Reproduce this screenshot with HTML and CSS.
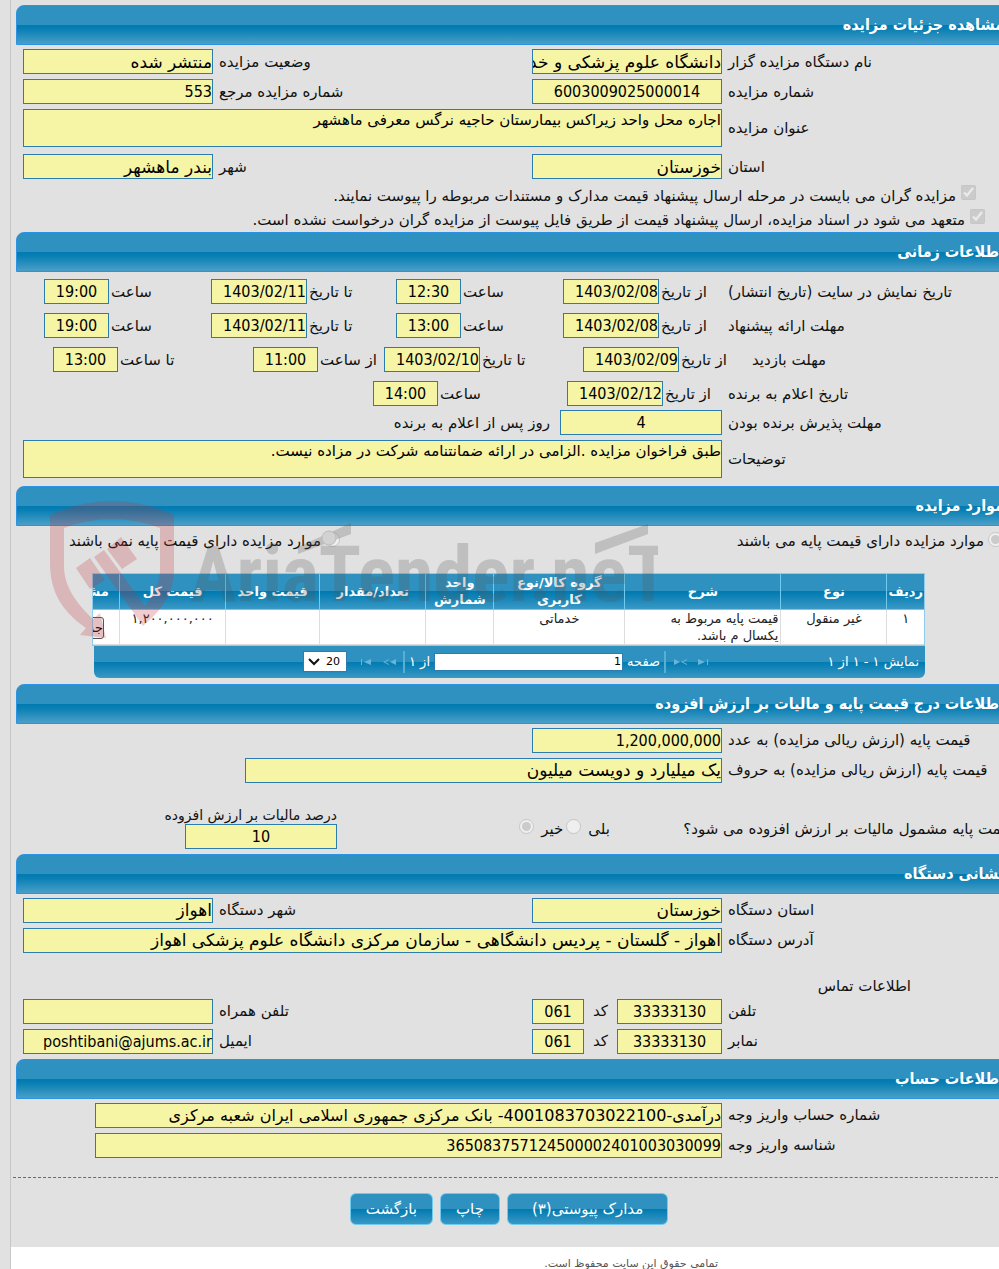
FILE: index.html
```html
<!DOCTYPE html>
<html lang="fa" dir="rtl">
<head>
    <meta charset="UTF-8">
    <meta name="viewport" content="width=device-width, initial-scale=1.0">
    <title>مشاهده جزئیات مزایده</title>
    <link rel="stylesheet" href="styles.css">
</head>
<body>
<main class="page">
<form class="panel">

    <!-- مشخصات مزایده -->
    <h2 class="bar">مشاهده جزئیات مزایده</h2>
    <div class="rows">
        <div class="row">
            <label for="org">نام دستگاه مزایده گزار</label>
            <input class="field fa" id="org" value="دانشگاه علوم پزشکی و خدمات" readonly>
            <label for="status">وضعیت مزایده</label>
            <input class="field fa" id="status" value="منتشر شده" readonly>
        </div>
        <div class="row">
            <label for="number">شماره مزایده</label>
            <input class="field center" id="number" value="6003009025000014" readonly>
            <label for="refNumber">شماره مزایده مرجع</label>
            <input class="field" id="refNumber" value="553" readonly>
        </div>
        <div class="row tall">
            <label for="subject">عنوان مزایده</label>
            <textarea class="field area" id="subject" readonly>اجاره محل واحد زیراکس بیمارستان حاجیه نرگس معرفی ماهشهر</textarea>
        </div>
        <div class="row">
            <label for="province">استان</label>
            <input class="field fa" id="province" value="خوزستان" readonly>
            <label for="city">شهر</label>
            <input class="field fa" id="city" value="بندر ماهشهر" readonly>
        </div>
    </div>
    <div class="checks">
        <div class="check first">
            <input type="checkbox" id="docs" checked disabled>
            <label for="docs">مزایده گران می بایست در مرحله ارسال پیشنهاد قیمت مدارک و مستندات مربوطه را پیوست نمایند.</label>
        </div>
        <div class="check">
            <input type="checkbox" id="files" checked disabled>
            <label for="files">متعهد می شود در اسناد مزایده، ارسال پیشنهاد قیمت از طریق فایل پیوست از مزایده گران درخواست نشده است.</label>
        </div>
    </div>

    <!-- اطلاعات زمانی -->
    <h2 class="bar">اطلاعات زمانی</h2>
    <div class="times">
        <div class="time-row">
            <span class="caption">تاریخ نمایش در سایت (تاریخ انتشار)</span>
            <div class="pair"><label for="showFrom">از تاریخ</label><input class="field date" id="showFrom" value="1403/02/08" readonly></div>
            <div class="pair"><label for="showFromTime">ساعت</label><input class="field time" id="showFromTime" value="12:30" readonly></div>
            <div class="pair"><label for="showTo">تا تاریخ</label><input class="field date" id="showTo" value="1403/02/11" readonly></div>
            <div class="pair"><label for="showToTime">ساعت</label><input class="field time" id="showToTime" value="19:00" readonly></div>
        </div>
        <div class="time-row">
            <span class="caption">مهلت ارائه پیشنهاد</span>
            <div class="pair"><label for="offerFrom">از تاریخ</label><input class="field date" id="offerFrom" value="1403/02/08" readonly></div>
            <div class="pair"><label for="offerFromTime">ساعت</label><input class="field time" id="offerFromTime" value="13:00" readonly></div>
            <div class="pair"><label for="offerTo">تا تاریخ</label><input class="field date" id="offerTo" value="1403/02/11" readonly></div>
            <div class="pair"><label for="offerToTime">ساعت</label><input class="field time" id="offerToTime" value="19:00" readonly></div>
        </div>
        <div class="time-row visit">
            <span class="caption">مهلت بازدید</span>
            <div class="pair"><label for="visitFrom">از تاریخ</label><input class="field date" id="visitFrom" value="1403/02/09" readonly></div>
            <div class="pair"><label for="visitTo">تا تاریخ</label><input class="field date" id="visitTo" value="1403/02/10" readonly></div>
            <div class="pair"><label for="visitFromTime">از ساعت</label><input class="field time" id="visitFromTime" value="11:00" readonly></div>
            <div class="pair"><label for="visitToTime">تا ساعت</label><input class="field time" id="visitToTime" value="13:00" readonly></div>
        </div>
        <div class="time-row winner">
            <span class="caption">تاریخ اعلام به برنده</span>
            <div class="pair"><label for="winDate">از تاریخ</label><input class="field date" id="winDate" value="1403/02/12" readonly></div>
            <div class="pair"><label for="winTime">ساعت</label><input class="field time" id="winTime" value="14:00" readonly></div>
        </div>
    </div>
    <div class="rows">
        <div class="row accept">
            <label for="accept">مهلت پذیرش برنده بودن</label>
            <input class="field center" id="accept" value="4" readonly>
            <span class="after">روز پس از اعلام به برنده</span>
        </div>
        <div class="row tall">
            <label for="notes">توضیحات</label>
            <textarea class="field area" id="notes" readonly>طبق فراخوان مزایده .الزامی در ارائه ضمانتنامه شرکت در مزاده نیست.</textarea>
        </div>
    </div>

    <!-- موارد مزایده -->
    <section class="items">
        <h2 class="bar">موارد مزایده</h2>
        <div class="choices">
            <div class="choice">
                <input type="radio" name="base" id="baseYes" checked disabled>
                <label for="baseYes">موارد مزایده دارای قیمت پایه می باشند</label>
            </div>
            <div class="choice">
                <input type="radio" name="base" id="baseNo" disabled>
                <label for="baseNo">موارد مزایده دارای قیمت پایه نمی باشند</label>
            </div>
        </div>
        <div class="grid-box">
            <div class="grid-scroll">
                <table>
                    <colgroup>
                        <col class="c-row"><col class="c-mid"><col class="c-desc"><col class="c-group"><col class="c-unit"><col class="c-mid"><col class="c-price"><col class="c-mid"><col class="c-view">
                    </colgroup>
                    <thead>
                        <tr>
                            <th>ردیف</th>
                            <th>نوع</th>
                            <th>شرح</th>
                            <th>گروه کالا/نوع کاربری</th>
                            <th>واحد شمارش</th>
                            <th>تعداد/مقدار</th>
                            <th>قیمت واحد</th>
                            <th>قیمت کل</th>
                            <th>مشاهده</th>
                        </tr>
                    </thead>
                    <tbody>
                        <tr>
                            <td>۱</td>
                            <td>غیر منقول</td>
                            <td class="desc">قیمت پایه مربوط به یکسال م باشد.</td>
                            <td>خدماتی</td>
                            <td></td>
                            <td></td>
                            <td></td>
                            <td>۱,۲۰۰,۰۰۰,۰۰۰</td>
                            <td><button type="button" class="detail">جزئیات</button></td>
                        </tr>
                    </tbody>
                </table>
            </div>
            <div class="pager">
                <span class="info">نمایش ۱ - ۱ از ۱</span>
                <div class="nav">
                    <svg class="arrow" viewBox="0 0 14 8"><path d="M1 1L8 4L1 7ZM10 1H11V7H10Z"/></svg>
                    <svg class="arrow" viewBox="0 0 14 8"><path d="M1 1L7 4L1 7ZM14 1L8 4L14 7V6L10 4L14 2Z"/></svg>
                    <span class="sep"></span>
                    <label for="pageNo">صفحه</label>
                    <input class="page-no" id="pageNo" value="1">
                    <span>از ۱</span>
                    <span class="sep"></span>
                    <svg class="arrow" viewBox="0 0 14 8"><path d="M14 1L8 4L14 7ZM7 1L1 4L7 7V6L3 4L7 2Z"/></svg>
                    <svg class="arrow" viewBox="0 0 14 8"><path d="M13 1L6 4L13 7ZM3 1H4V7H3Z"/></svg>
                    <span class="size">
                        <select aria-label="تعداد در صفحه"><option>20</option></select>
                        <svg viewBox="0 0 12 8"><path d="M1 1L6 6L11 1"/></svg>
                    </span>
                </div>
            </div>
        </div>
        <svg class="mark" viewBox="0 0 610 142" aria-hidden="true">
            <g class="mark-red">
                <path d="M2 17Q64 -11 126 17V72C126 96 112 114 95 128L46 59L56 52L97 108C106 95 112 84 112 72V30Q64 12 16 30V68C16 88 28 105 45 121L52 115L58 140L32 137L38 130C12 112 2 92 2 64Z"/>
                <path d="M59 51L73 39L89 61L74 71Z"/>
                <path d="M28 70L42 60L57 82L42 91Z"/>
            </g>
            <g class="mark-gray">
                <path d="M250 49L303 25V36L250 56Z"/>
                <path d="M547 45L600 26V36L547 56Z"/>
                <text x="142" y="103" direction="ltr">AriaTender.neT</text>
            </g>
            <circle class="mark-dot" cx="281" cy="40" r="7"/>
        </svg>
    </section>

    <!-- قیمت پایه و مالیات -->
    <h2 class="bar">اطلاعات درج قیمت پایه و مالیات بر ارزش افزوده</h2>
    <div class="rows">
        <div class="row">
            <label for="price">قیمت پایه (ارزش ریالی مزایده) به عدد</label>
            <input class="field" id="price" value="1,200,000,000" readonly>
        </div>
        <div class="row words">
            <label for="priceWords">قیمت پایه (ارزش ریالی مزایده) به حروف</label>
            <input class="field fa wide" id="priceWords" value="یک میلیارد و دویست میلیون" readonly>
        </div>
    </div>
    <div class="tax">
        <span class="question">قیمت پایه مشمول مالیات بر ارزش افزوده می شود؟</span>
        <div class="yesno">
            <label for="taxYes">بلی</label><input type="radio" name="tax" id="taxYes" disabled>
            <label for="taxNo">خیر</label><input type="radio" name="tax" id="taxNo" checked disabled>
        </div>
        <div class="percent">
            <label for="percent">درصد مالیات بر ارزش افزوده</label>
            <input class="field center" id="percent" value="10" readonly>
        </div>
    </div>

    <!-- نشانی دستگاه -->
    <h2 class="bar">نشانی دستگاه</h2>
    <div class="rows">
        <div class="row">
            <label for="orgProvince">استان دستگاه</label>
            <input class="field fa" id="orgProvince" value="خوزستان" readonly>
            <label for="orgCity">شهر دستگاه</label>
            <input class="field fa" id="orgCity" value="اهواز" readonly>
        </div>
        <div class="row">
            <label for="address">آدرس دستگاه</label>
            <input class="field fa wide" id="address" value="اهواز - گلستان - پردیس دانشگاهی - سازمان مرکزی دانشگاه علوم پزشکی اهواز" readonly>
        </div>
    </div>
    <h3 class="sub">اطلاعات تماس</h3>
    <div class="rows contact">
        <div class="row">
            <label for="phone">تلفن</label>
            <div class="phone">
                <input class="field center number" id="phone" value="33333130" readonly>
                <label for="phoneCode">کد</label>
                <input class="field center code" id="phoneCode" value="061" readonly>
            </div>
            <label for="mobile">تلفن همراه</label>
            <input class="field" id="mobile" value="" readonly>
        </div>
        <div class="row">
            <label for="fax">نمابر</label>
            <div class="phone">
                <input class="field center number" id="fax" value="33333130" readonly>
                <label for="faxCode">کد</label>
                <input class="field center code" id="faxCode" value="061" readonly>
            </div>
            <label for="email">ایمیل</label>
            <input class="field" id="email" value="poshtibani@ajums.ac.ir" readonly>
        </div>
    </div>

    <!-- اطلاعات حساب -->
    <h2 class="bar">اطلاعات حساب</h2>
    <div class="rows">
        <div class="row account">
            <label for="account">شماره حساب واریز وجه</label>
            <input class="field mixed wide" id="account" value="درآمدی-4001083703022100- بانک مرکزی جمهوری اسلامی ایران شعبه مرکزی" readonly>
        </div>
        <div class="row account">
            <label for="payId">شناسه واریز وجه</label>
            <input class="field wide" id="payId" value="365083757124500002401003030099" readonly>
        </div>
    </div>

    <div class="actions">
        <button type="button" class="btn long">مدارک پیوستی(۳)</button>
        <button type="button" class="btn">چاپ</button>
        <button type="button" class="btn">بازگشت</button>
    </div>
</form>
<footer class="footer">تمامی حقوق این سایت محفوظ است.</footer>
</main>
</body>
</html>
```
FILE: styles.css
```css
* {
    box-sizing: border-box;
}
body {
    margin: 0;
    background-color: #e1e1e1;
    color: #111;
    font-family: "DejaVu Sans", Tahoma, sans-serif;
    font-size: 15px;
    line-height: 20px;
    overflow-x: hidden;
}
input, textarea, select, button {
    font-family: inherit;
    margin: 0;
}
.page {
    margin-left: 10px;
    border-left: 1px solid #c6c6c6;
    overflow: hidden;
}
/* فرم از لبه راست پنجره کمی بیرون می زند */
.panel {
    margin-right: -14px;
    padding-top: 5px;
}
.bar {
    height: 40px;
    margin: 0 0 0 5px;
    padding: 0 8px;
    border: 1px solid #2b93e2;
    border-radius: 8px 8px 0 0;
    background: linear-gradient(#2f91c0 0, #2f91c0 50%, #007ab0 50%, #0a80b4 62%, #4a9fc8 100%);
    color: #fff;
    font-family: "DejaVu Sans Condensed", "DejaVu Sans", sans-serif;
    font-size: 16px;
    font-weight: bold;
    line-height: 38px;
}

/* ردیف ها */
.rows {
    display: flex;
    flex-direction: column;
    gap: 5px;
    padding: 4px 0 5px 12px;
}
.row {
    display: grid;
    grid-template-columns: 291px 190px 1fr 190px;
    align-items: center;
}
.row.tall {
    margin-bottom: 2px;
}
.row > label, .caption {
    text-align: left;
    padding-left: 6px;
    white-space: nowrap;
}
.field {
    width: 100%;
    min-width: 0;
    height: 25px;
    padding: 0;
    border: 1px solid #2a7dae;
    border-radius: 0;
    background-color: #f6f4a5;
    color: #000;
    font-family: "DejaVu Sans Condensed", "DejaVu Sans", sans-serif;
    font-size: 16px;
}
.fa {
    font-family: "DejaVu Sans", sans-serif;
    font-size: 17px;
}
.mixed {
    font-family: "DejaVu Sans", sans-serif;
}
.center {
    text-align: center;
}
.area {
    grid-column: 2 / -1;
    display: block;
    height: 38px;
    font-family: "DejaVu Sans", sans-serif;
    font-size: 15px;
    line-height: 20px;
    resize: none;
    overflow: hidden;
}
.wide {
    grid-column: 2 / -1;
}
.check {
    display: flex;
    align-items: center;
    gap: 5px;
    height: 24px;
    padding-right: 28px;
}
.check.first {
    padding-right: 37px;
}
.check input {
    width: 15px;
    height: 15px;
    margin-bottom: 8px;
}

/* تاریخ و ساعت */
.times {
    display: flex;
    flex-direction: column;
    gap: 9px;
    padding-top: 7px;
}
.time-row {
    display: grid;
    grid-template-columns: 291px 159px 167px 185px 167px;
    align-items: center;
}
.time-row.visit {
    grid-template-columns: 267px 163px 199px 131px 200px;
}
.time-row.winner {
    grid-template-columns: 291px 155px 194px;
}
.pair {
    display: flex;
    justify-content: flex-end;
    align-items: center;
    gap: 2px;
    white-space: nowrap;
}
.date {
    width: 96px;
}
.time {
    width: 65px;
    text-align: center;
}
.row.accept {
    grid-template-columns: 291px 162px 1fr;
}
.after {
    padding-right: 10px;
}

/* جدول موارد */
.items {
    position: relative;
    padding-top: 1px;
}
.choices {
    display: flex;
    justify-content: space-between;
    padding: 5px 10px 0 58px;
}
.choice {
    display: flex;
    align-items: center;
    gap: 4px;
}
.choice input, .yesno input {
    width: 15px;
    height: 15px;
    margin-bottom: 4px;
}
.grid-box {
    margin: 22px 88px 6px 81px;
}
.grid-scroll {
    overflow: hidden;
    border: 1px solid #8fcbea;
}
table {
    width: 877px;
    table-layout: fixed;
    border-collapse: collapse;
    background-color: #fff;
    font-size: 13px;
    line-height: 17px;
}
.c-row { width: 37px; }
.c-mid { width: 106px; }
.c-desc { width: 156px; }
.c-group { width: 131px; }
.c-unit { width: 68px; }
.c-price { width: 94px; }
.c-view { width: 72px; }
th {
    height: 35px;
    padding: 0;
    border-left: 1px solid #6fcbf0;
    border-bottom: 1px solid #6fcbf0;
    background: linear-gradient(#2f91c0 0, #2f91c0 50%, #007ab0 50%, #3a98c5 100%);
    color: #fff;
}
td {
    height: 35px;
    padding: 0 2px;
    border-left: 1px solid #ddd;
    border-bottom: 1px solid #ddd;
    text-align: center;
    vertical-align: top;
    color: #222;
}
.desc {
    text-align: right;
    padding-left: 28px;
}
.detail {
    height: 22px;
    margin-top: 7px;
    padding: 0;
    border: 1px solid #555;
    border-radius: 3px;
    background-color: #efefef;
    font-size: 13px;
}
.pager {
    display: flex;
    align-items: center;
    height: 32px;
    margin-left: 2px;
    padding: 0 6px;
    border-radius: 0 0 6px 6px;
    background: linear-gradient(#2f91c0 0, #2f91c0 50%, #007ab0 50%, #3a98c5 100%);
    color: #fff;
    font-size: 13px;
}
.info {
    width: 205px;
}
.nav {
    display: flex;
    align-items: center;
    gap: 4px;
}
.arrow {
    width: 14px;
    height: 8px;
    margin: 0 3px;
    fill: #68b5da;
}
.sep {
    width: 2px;
    height: 22px;
    background-color: #5badd2;
}
.page-no {
    width: 189px;
    height: 18px;
    padding: 0 1px;
    border: 1px solid #2a7dae;
    background-color: #fff;
    font-size: 11px;
}
.size {
    display: grid;
    align-items: center;
    margin-right: 4px;
}
.size select, .size svg {
    grid-area: 1 / 1;
}
.size select {
    width: 44px;
    height: 21px;
    padding: 0 6px;
    border: 1px solid #2a7dae;
    border-radius: 0;
    background-color: #fff;
    font-size: 11px;
    appearance: none;
}
.size svg {
    width: 12px;
    height: 8px;
    justify-self: end;
    margin-left: 5px;
    fill: none;
    stroke: #111;
    stroke-width: 2;
    pointer-events: none;
}
/* نشان کم رنگ روی جدول */
.mark {
    position: absolute;
    top: 13px;
    left: 37px;
    width: 610px;
    height: 142px;
    pointer-events: none;
}
.mark-red {
    fill: #c4303a;
    opacity: 0.24;
}
.mark-gray {
    fill: #555;
    opacity: 0.24;
    font-family: "Liberation Sans Narrow", "Roboto Condensed", "Open Sans Condensed", Roboto, sans-serif;
    font-size: 78px;
    font-weight: bold;
}
.mark-dot {
    fill: #d2d2d2;
    stroke: #bbb;
}

/* مالیات */
.tax {
    display: flex;
    align-items: flex-end;
    height: 66px;
    padding-bottom: 5px;
}
.question {
    width: 328px;
    padding-bottom: 10px;
    text-align: left;
    white-space: nowrap;
}
.yesno {
    display: flex;
    align-items: center;
    gap: 3px;
    width: 348px;
    padding: 0 75px 10px 0;
}
.yesno input {
    margin-right: 4px;
}
.percent {
    width: 152px;
}
.percent label {
    display: block;
    height: 17px;
    font-size: 14px;
    line-height: 17px;
    white-space: nowrap;
}

/* تماس و حساب */
.sub {
    margin: 18px 102px 3px 0;
    font-size: 15px;
    font-weight: normal;
}
.contact {
    padding-top: 0;
}
.phone {
    display: flex;
    align-items: center;
    justify-content: space-between;
}
.phone .number {
    width: 105px;
}
.phone .code {
    width: 52px;
}
.account .wide {
    width: calc(100% - 72px);
}
.words .wide {
    width: calc(100% - 222px);
}
.actions {
    display: flex;
    justify-content: center;
    gap: 7px;
    margin: 14px 0 0 2px;
    padding: 15px 8px 22px 0;
    border-top: 1px dashed #2a7dae;
}
.btn {
    height: 32px;
    padding: 0 15px;
    border: 1px solid #6fcbf0;
    border-radius: 6px;
    background: linear-gradient(#2f91c0 0, #2f91c0 50%, #007ab0 50%, #3a98c5 100%);
    color: #fff;
    font-size: 15px;
    cursor: pointer;
}
.btn.long {
    padding: 0 24px;
}
.footer {
    padding: 7px 281px 0 0;
    height: 30px;
    background-color: #fff;
    color: #555;
    font-size: 11px;
}
```
